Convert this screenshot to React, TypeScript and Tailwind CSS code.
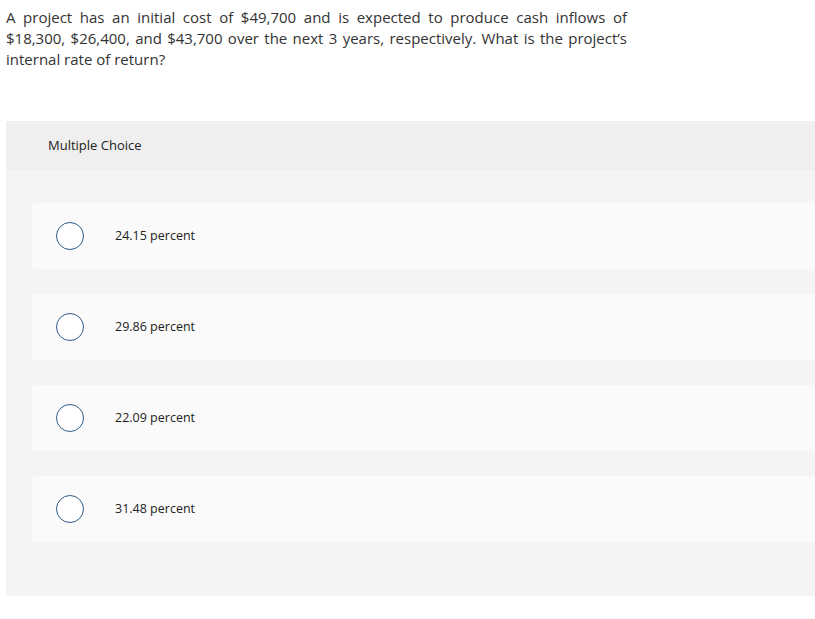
import React from 'react'

const OPTIONS = ['24.15 percent', '29.86 percent', '22.09 percent', '31.48 percent']

export default function App() {
  return (
    <div className="min-h-[619px] bg-white pl-[6px] pt-[7px] text-[#333]" style={{ fontFamily: '"Open Sans", Lato, sans-serif' }}>
      <p className="w-[621px] text-justify text-[15px] leading-[21px]">
        A project has an initial cost of $49,700 and is expected to produce cash inflows of $18,300, $26,400, and $43,700
        over the next 3 years, respectively. What is the project’s internal rate of return?
      </p>

      <div className="mt-[51px] bg-[#f4f4f4] rounded-bl-[3px] pb-[54px]">
        <div className="h-[49px] bg-[#efefef] flex items-center pl-[42px] text-[13px] text-[#222]">Multiple Choice</div>
        <div className="pt-[33px] pl-[26px] flex flex-col gap-[25px]">
          {OPTIONS.map(opt => (
            <div key={opt} className="h-[66px] bg-[#fafafa] rounded-l-[3px] flex items-center pl-[24px]">
              <span className="w-[28px] h-[28px] rounded-full border-[1.5px] border-[#2f5b86] bg-white shrink-0" />
              <span className="ml-[31px] text-[12.5px] text-[#222]">{opt}</span>
            </div>
          ))}
        </div>
      </div>
    </div>
  )
}
